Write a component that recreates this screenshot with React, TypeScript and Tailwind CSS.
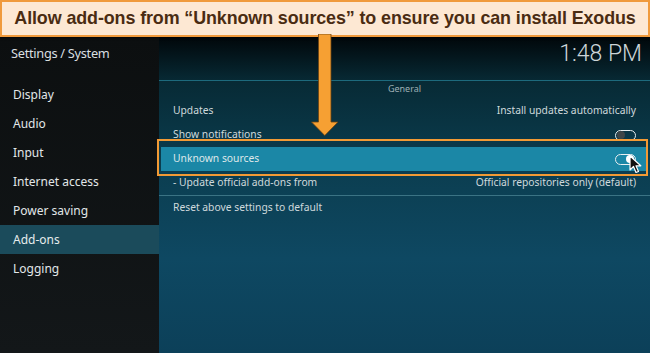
import React from "react"

const menu = [
  "Display",
  "Audio",
  "Input",
  "Internet access",
  "Power saving",
  "Add-ons",
  "Logging",
]

function Toggle({ on }: { on: boolean }) {
  return (
    <div className="flex h-[11px] w-[21px] items-center rounded-full border-[1.5px] border-[#e8eef0] px-[1px]">
      <div
        className={
          on
            ? "ml-auto h-[8px] w-[8px] rounded-full bg-white"
            : "h-[8px] w-[8px] rounded-full bg-[#3d4548]"
        }
      />
    </div>
  )
}

function Row({
  label,
  value,
  active,
}: {
  label: string
  value?: React.ReactNode
  active?: boolean
}) {
  return (
    <div
      className={
        active
          ? "mx-[2px] flex h-[24px] items-center justify-between bg-[#1b87a6] pl-[12px] pr-[12px] text-[10.3px] text-[#dfe8ea]"
          : "flex h-[24px] items-center justify-between px-[14px] text-[10.3px] text-[#cfd9dc]"
      }
    >
      <span>{label}</span>
      {value}
    </div>
  )
}

export default function App() {
  return (
    <div className="relative flex h-[353px] w-[650px] flex-col overflow-hidden bg-[#111517] font-['Noto_Sans',sans-serif]">
      <div className="z-10 flex h-[37px] items-center justify-center border-2 border-[#f09a3c] bg-[#fde8d3] shadow-[0_1px_2px_rgba(0,0,0,0.5)]">
        <p className="font-['Liberation_Sans',Arial,sans-serif] text-[17.9px] font-bold tracking-[-0.1px] text-[#4a2c12]">
          Allow add-ons from “Unknown sources” to ensure you can install Exodus
        </p>
      </div>

      <div className="flex flex-1">
        <aside className="w-[159px] bg-gradient-to-b from-[#0c0f10] to-[#131719]">
          <div className="flex h-[34px] items-center px-[11px] text-[12.8px] tracking-[-0.3px] text-[#d9dfe1]">
            Settings / System
          </div>
          <div className="mt-[9px]">
            {menu.map((m) => (
              <div
                key={m}
                className={
                  m === "Add-ons"
                    ? "flex h-[29px] items-center bg-[#1b4b5b] px-[13px] text-[12px] text-[#e6eced]"
                    : "flex h-[29px] items-center px-[13px] text-[12px] text-[#e2e7e9]"
                }
              >
                {m}
              </div>
            ))}
          </div>
        </aside>

        <main className="relative flex-1 bg-[linear-gradient(to_bottom,#01070a_0%,#072a35_14%,#0b3d4f_40%,#0e4862_70%,#0c4059_100%)]">
          <div className="flex h-[34px] items-center justify-end px-[8px] font-['Roboto',sans-serif] text-[23px] font-light text-[#cdd5d8]">
            1:48 PM
          </div>
          <div className="mt-[9px] h-px bg-[#1d6a7d]" />
          <div className="flex h-[16px] items-center justify-center text-[9px] text-[#9fb0b5]">
            General
          </div>
          <div className="mt-[2px]">
            <Row
              label="Updates"
              value={<span className="text-[#cfd9dc]">Install updates automatically</span>}
            />
            <Row label="Show notifications" value={<Toggle on={false} />} />
            <Row label="Unknown sources" value={<Toggle on />} active />
            <Row
              label="- Update official add-ons from"
              value={<span>Official repositories only (default)</span>}
            />
            <div className="h-px bg-[#3b7384]" />
            <Row label="Reset above settings to default" />
          </div>

          {/* annotation box */}
          <div className="pointer-events-none absolute left-[-2px] top-[102px] h-[37px] w-[491px] border-2 border-[#f29a35]" />

          {/* cursor */}
          <svg
            className="absolute left-[470px] top-[118px]"
            width="13"
            height="19"
            viewBox="0 0 13 19"
          >
            <path
              d="M1 1 L1 15 L4.5 11.5 L7 17.5 L9.5 16.5 L7 10.8 L11.8 10.8 Z"
              fill="#111"
              stroke="#fff"
              strokeWidth="1.2"
              strokeLinejoin="round"
            />
          </svg>
        </main>
      </div>

      {/* arrow */}
      <svg
        className="absolute left-[310px] top-[34px] z-20"
        width="30"
        height="103"
        viewBox="0 0 30 103"
      >
        <path
          d="M8.5 0 H21 V88 H28 L14.75 101.5 L1.5 88 H8.5 Z"
          fill="#f6a033"
          stroke="#6b4213"
          strokeWidth="0.8"
        />
      </svg>
    </div>
  )
}
